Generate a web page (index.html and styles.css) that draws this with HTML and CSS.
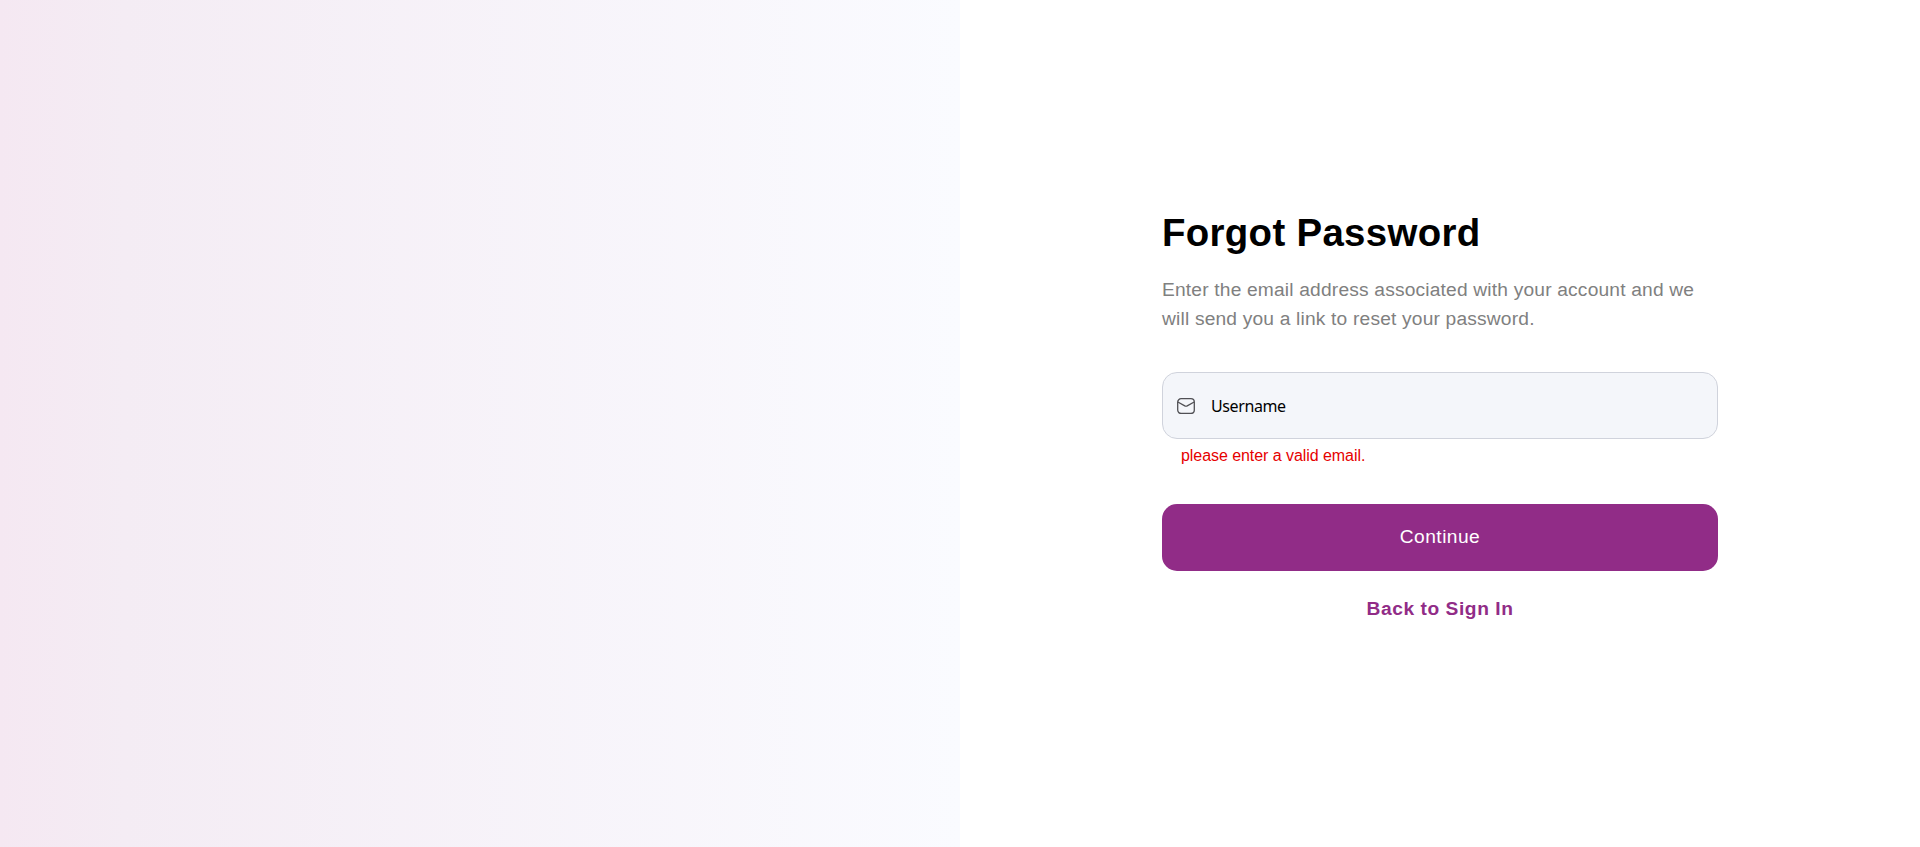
FILE: index.html
```html
<!DOCTYPE html>
<html lang="en">
<head>
<meta charset="utf-8">
<title>Forgot Password</title>
<link rel="stylesheet" href="styles.css">
</head>
<body>
<main class="page">
  <section class="banner"></section>
  <section class="panel">
    <form class="form">
      <h1 class="title">Forgot Password</h1>
      <p class="intro">Enter the email address associated with your account and we<br>will send you a link to reset your password.</p>
      <div class="field">
        <svg class="icon" viewBox="0 0 18 16" fill="none" stroke="#505054" stroke-width="1.3" stroke-linecap="round" stroke-linejoin="round"><rect x=".7" y=".7" width="16.6" height="14.8" rx="3.4"/><path d="M1.3 4.2 7.8 7.9Q9 8.5 10.2 7.9L16.7 4.2"/></svg>
        <span class="value">Username</span>
      </div>
      <p class="error">please enter a valid email.</p>
      <button class="submit" type="button">Continue</button>
      <a class="back">Back to Sign In</a>
    </form>
  </section>
</main>
</body>
</html>
```

FILE: styles.css
```css
* { box-sizing: border-box; }
body { margin: 0; font-family: "Liberation Sans", Arial, sans-serif; background: #fff; }
.page { display: grid; grid-template-columns: 1fr 1fr; height: 847px; }
.banner { background: linear-gradient(90deg, #f5e8f2 0%, #f4ecf4 13%, #fafbff 100%); }
.panel { display: flex; padding: 209px 0 0 202px; }
.form { width: 556px; display: flex; flex-direction: column; }
.title { margin: 0; font-size: 38.4px; line-height: 48px; letter-spacing: .33px; color: #000; white-space: nowrap; }
.intro { margin: 18px 0 0; font-size: 19.2px; line-height: 29px; letter-spacing: .18px; color: #808080; white-space: nowrap; }
.field { margin-top: 39px; height: 67px; display: flex; align-items: center; padding-left: 14px; gap: 16px; border: 1px solid #d0d3dc; border-radius: 15px; background: #f4f6fa; }
.icon { width: 18px; height: 16px; }
.value { font: 16px/24px "Noto Sans", sans-serif; letter-spacing: -.4px; color: #000; }
.error { margin: 5px 0 0 19px; font-size: 16px; line-height: 24px; letter-spacing: -.06px; color: #e60000; }
.submit { margin-top: 36px; height: 67px; padding: 0 0 2px; border: 0; border-radius: 15px; background: #912c87; color: #fff; font: 19.2px "Liberation Sans", Arial, sans-serif; letter-spacing: .45px; }
.back { margin-top: 23px; text-align: center; font-size: 19.2px; line-height: 29px; font-weight: 700; letter-spacing: .56px; color: #912c87; }
```
